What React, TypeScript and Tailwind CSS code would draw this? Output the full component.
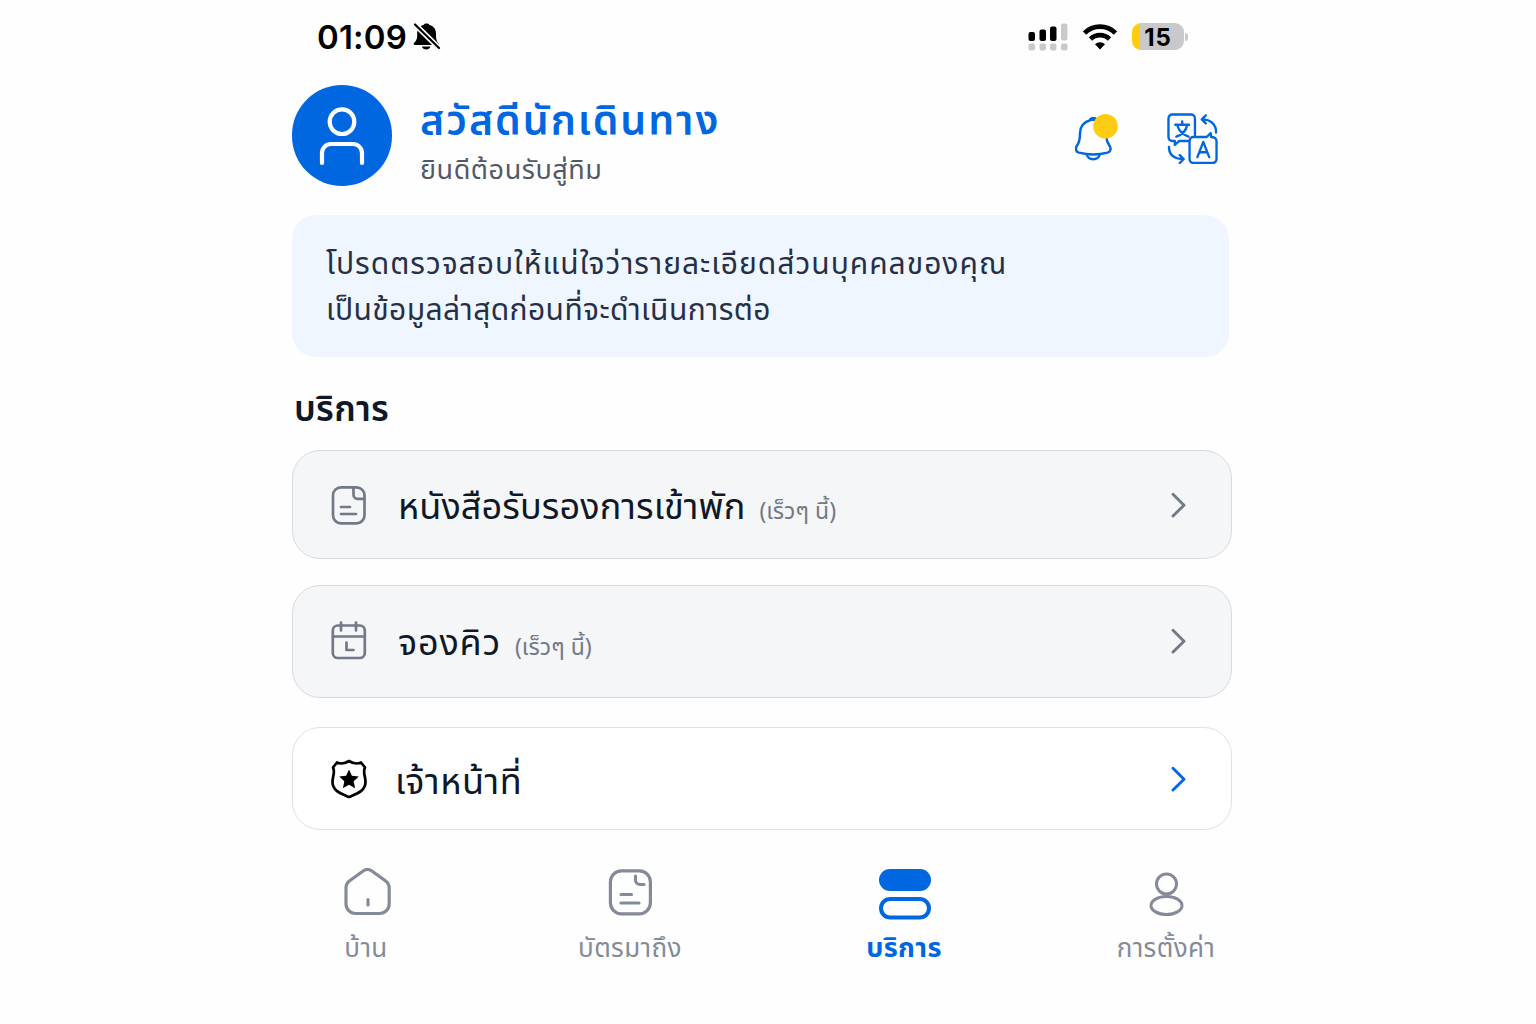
import React from 'react';

interface ServiceItem {
  label: string;
  soon?: boolean;
  icon: React.ReactNode;
  box: string;
  text: string;
  chevron: string;
}

const SOON = '(เร็วๆ นี้)';

const StatusBar = () => (
  <div className="flex h-[73px] items-center justify-between pl-[25px] pr-[44px]">
    <div className="flex items-center gap-[6px]">
      <span className="w-[90px] whitespace-nowrap font-['Inter',sans-serif] text-[33px] font-semibold leading-[40px] tracking-[0.2px] text-black">01:09</span>
      <svg width="28" height="28" viewBox="0 0 28 28" fill="none">
        <path d="M13.500 .5c1.600 0 2.600.6 3 1.500 4 1 6.500 4 6.500 8.500 0 6 .5 7.500 3 10.500v1H2.200c-1.700 0-2-1.200-1-2.300C4 17 4.200 15 4.200 10.500c0-4.500 2.300-7.500 6.300-8.500.4-.9 1.400-1.500 3-1.500Z" fill="#000" />
        <path d="M8.800 23.500h8.700c-.6 2-2.200 3-4.200 3s-3.900-1-4.500-3Z" fill="#000" />
        <path d="M0 -0.500 28 27" stroke="#fefefe" strokeWidth="5.500" />
        <path d="M2 1.500 26 25" stroke="#000" strokeWidth="2.200" strokeLinecap="round" />
      </svg>
    </div>
    <div className="flex items-center">
      <svg width="40" height="28" viewBox="0 0 40 28">
        <rect x="0.500" y="9" width="6.500" height="9" rx="2" fill="#000" />
        <rect x="11.500" y="6.500" width="6.500" height="11.500" rx="2" fill="#000" />
        <rect x="22" y="3.500" width="6.500" height="14.500" rx="2" fill="#000" />
        <rect x="33" y="0.500" width="6.500" height="17" rx="2" fill="#c9c9cb" />
        {[0.5, 11.5, 22, 33].map((x) => (
          <rect key={x} x={x} y="20.500" width="6.500" height="7" rx="2" fill="#c9c9cb" />
        ))}
      </svg>
      <svg className="ml-[15px]" width="34" height="26" viewBox="0 0 34 26" fill="none" stroke="#000">
        <path d="M1.500 9a22 22 0 0 1 31 0" strokeWidth="4.700" />
        <path d="M7.500 15a13.500 13.500 0 0 1 19 0" strokeWidth="4.700" />
        <path d="M17 25.500 12 20.300a7 7 0 0 1 10 0Z" fill="#000" stroke="none" />
      </svg>
      <div className="ml-[15px] flex h-[27px] w-[52px] items-center justify-center overflow-hidden rounded-[9px] bg-linear-to-r from-[#ffcc10] from-[8px] to-[#c9c9cb] to-[8px]">
        <span className="pt-[1px] font-['Inter',sans-serif] text-2xl font-bold leading-[27px] tracking-[0.8px] text-black">15</span>
      </div>
      <div className="ml-[1px] h-[8px] w-[3px] rounded-r-full bg-[#c9c9cb]" />
    </div>
  </div>
);

const BellIcon = () => (
  <svg width="46" height="50" viewBox="0 0 46 50" fill="none" stroke="#0067e0" strokeWidth="2.500" strokeLinecap="round" strokeLinejoin="round">
    <path d="M15 7.300c.5-2.600 6-2.600 6.500 0 6.500 2 10 7 10 13 0 7 .5 8.500 2.500 11.500 2.500 3.500 2 6.800-1.500 7.800-9 2.300-19.500 2.300-28.500 0C.500 38.600 0 35.300 2.500 31.800 4.700 28.600 5 26.800 5 20.300c0-6.500 3.500-11 10-13Z" />
    <path d="M12 42c1.500 5.600 11 5.600 12.500 0" />
    <path d="M15.500 6.800c1-2 4.500-2 5.500 0Z" fill="#0067e0" />
    <circle cx="30.500" cy="13.200" r="12.300" fill="#ffcc14" stroke="none" />
  </svg>
);

const TranslateIcon = () => (
  <svg width="51" height="51" viewBox="0 0 52 52" fill="none" stroke="#0067e0" strokeWidth="2.400" strokeLinecap="round" strokeLinejoin="round">
    <path d="M22.500 28.500H12.500l-4.500 4v-4H5.500a4 4 0 0 1-4-4v-19a4 4 0 0 1 4-4h19a4 4 0 0 1 4 4v18" />
    <path d="M27 24.500h13.500l4-4 .5 4c3 0 5.500 1.500 5.500 4v18.500a4 4 0 0 1-4 4H27a4 4 0 0 1-4-4V28.500a4 4 0 0 1 4-4Z" />
    <path d="M8.500 12h14M15.500 8.500v3.500M20.500 12.500c-1 5.500-5 9.500-11 11.500M10.500 12.500c1.500 5.500 5.500 9.500 11.500 11.500" />
    <path d="m31 45 6-15.500 6 15.500M33 40h8" />
    <path d="M50 20c.3-8-5-13.500-14.500-13.500M39.500 2.500l-4 4 4 4M2 34.500c0 8 4.500 12.500 15 12.500M13 43l4 4-4 4" />
  </svg>
);

const Header = () => (
  <header className="flex h-[142px] items-start pt-[12px]">
    <div className="flex h-[101px] w-[100px] items-center justify-center rounded-full bg-[#0067e0]">
      <svg width="46" height="60" viewBox="0 0 46 60" fill="none" stroke="#fff" strokeWidth="4.200" strokeLinecap="round">
        <circle cx="23" cy="15.700" r="12.300" />
        <path d="M3 57V47a9 9 0 0 1 9-9h22a9 9 0 0 1 9 9v10" />
      </svg>
    </div>
    <div className="ml-[28px] flex-1">
      <h1 className="mt-[11px] h-[52px] whitespace-nowrap text-[41px] font-semibold leading-[52px] tracking-[1.95px] text-[#0067e0]">สวัสดีนักเดินทาง</h1>
      <p className="mt-[5px] h-[36px] whitespace-nowrap text-[27px] leading-[36px] tracking-[0.55px] text-[#525868]">ยินดีต้อนรับสู่ทิม</p>
    </div>
    <div className="mr-[14px] mt-[28px] flex gap-[46px]">
      <BellIcon />
      <TranslateIcon />
    </div>
  </header>
);

const DocumentIcon = () => (
  <svg width="36" height="40" viewBox="0 0 36 40" fill="none" stroke="#727987" strokeWidth="2.700" strokeLinecap="round" strokeLinejoin="round">
    <path d="M22.500 2.300H10a8 8 0 0 0-8 8v20a8 8 0 0 0 8 8h15.500a8 8 0 0 0 8-8V13.800M22.500 2.300h3a8 8 0 0 1 8 8v3.500h-7a4 4 0 0 1-4-4Z" />
    <path d="M10 22h9M10 29h15" />
  </svg>
);

const CalendarIcon = () => (
  <svg width="36" height="40" viewBox="0 0 36 40" fill="none" stroke="#727987" strokeWidth="2.700" strokeLinecap="round" strokeLinejoin="round">
    <rect x="1.800" y="4.500" width="32" height="32.500" rx="5" />
    <path d="M2 15.500h31.500M10 1.500v8M25 1.500v8M15.500 21.500v7.500h7" />
  </svg>
);

const BadgeIcon = () => (
  <svg width="36" height="40" viewBox="0 0 36 40" fill="none">
    <path d="M18 2c4 2.600 8.500 3.100 12 1.500l4 5c-2.500 4.500.5 8.500.5 14.500 0 9-8.500 11.500-16.500 15C10 34.500 1.500 32 1.500 23c0-6 3-10 .5-14.500l4-5C9.500 5.100 14 4.600 18 2Z" stroke="#000" strokeWidth="2.700" strokeLinejoin="round" />
    <path d="m18 10.500 2.900 6.300 6.900.8-5.100 4.700 1.400 6.900-6.100-3.500-6.100 3.500 1.400-6.900-5.100-4.700 6.900-.8Z" fill="#000" />
  </svg>
);

const SERVICES: ServiceItem[] = [
  {
    label: 'หนังสือรับรองการเข้าพัก',
    soon: true,
    icon: <DocumentIcon />,
    box: 'h-[109px] border-[#d8dade] bg-[#f5f6f8]',
    text: 'ml-[31px] pt-[6px] tracking-[0.1px]',
    chevron: '#727987',
  },
  {
    label: 'จองคิว',
    soon: true,
    icon: <CalendarIcon />,
    box: 'mt-[26px] h-[113px] border-[#d8dade] bg-[#f5f6f8] pb-[2px]',
    text: 'ml-[31px] pt-[6px] tracking-[0.8px]',
    chevron: '#727987',
  },
  {
    label: 'เจ้าหน้าที่',
    icon: <BadgeIcon />,
    box: 'mt-[29px] h-[103px] border-[#e0e1e4] bg-white',
    text: 'ml-[28px] pt-[8px] tracking-[0.6px]',
    chevron: '#0067e0',
  },
];

const ServiceRow = ({ item }: { item: ServiceItem }) => (
  <button type="button" className={`flex w-full items-center rounded-[28px] border pl-[38px] pr-[45px] text-left ${item.box}`}>
    {item.icon}
    <span className={`whitespace-nowrap text-[36px] leading-[48px] text-[#101828] ${item.text}`}>{item.label}</span>
    {item.soon && <span className="ml-[14px] mt-[15px] whitespace-nowrap text-[23px] leading-[32px] text-[#727987]">{SOON}</span>}
    <svg className="ml-auto" width="16" height="26" viewBox="0 0 16 26" fill="none" stroke={item.chevron} strokeWidth="2.900" strokeLinecap="round" strokeLinejoin="round">
      <path d="M3 2.300 14 13.200 3 24" />
    </svg>
  </button>
);

const BottomNav = () => (
  <nav className="flex h-[150px] pt-[36px] text-[26px] leading-[36px] tracking-[0.4px] text-[#848a97]">
    <a className="flex w-[148px] flex-col items-center">
      <svg className="ml-[3px] shrink-0" width="48" height="50" viewBox="0 0 48 50" fill="none" stroke="currentColor" strokeWidth="3.200" strokeLinecap="round" strokeLinejoin="round">
        <path d="M19.500 4.800a7 7 0 0 1 8 0l13.500 9.700c3 2.200 4.200 4.200 4.200 7V38a9.500 9.500 0 0 1-9.500 9.500H11.500A9.500 9.500 0 0 1 2 38V21.500c0-2.800 1-4.800 4-7Z" />
        <path d="M24 33.500v5.500" />
      </svg>
      <span className="mt-[15px] whitespace-nowrap">บ้าน</span>
    </a>
    <a className="ml-[116px] flex w-[148px] flex-col items-center">
      <svg className="shrink-0" width="44" height="50" viewBox="0 0 44 50" fill="none" stroke="currentColor" strokeWidth="3.200" strokeLinecap="round" strokeLinejoin="round">
        <rect x="2.400" y="4.800" width="40" height="43" rx="11" />
        <path d="M27.500 10v4a4.500 4.500 0 0 0 4.500 4.500h4M13 28.500h10.500M13 37h18" />
      </svg>
      <span className="mt-[15px] whitespace-nowrap">บัตรมาถึง</span>
    </a>
    <a className="ml-[126px] flex w-[148px] flex-col items-center font-bold text-[#0067e0]">
      <svg className="ml-px shrink-0" width="52" height="54" viewBox="0 0 52 54" fill="none">
        <rect y="3" width="52" height="22" rx="11" fill="currentColor" />
        <rect x="2" y="33" width="48" height="18.500" rx="9.250" stroke="currentColor" strokeWidth="4" />
      </svg>
      <span className="mt-[11px] whitespace-nowrap text-[27px] tracking-[0.4px]">บริการ</span>
    </a>
    <a className="ml-[122px] flex w-[132px] flex-col items-center">
      <svg className="shrink-0" width="36" height="50" viewBox="0 0 36 50" fill="none" stroke="currentColor" strokeWidth="3">
        <circle cx="18.500" cy="18" r="10" />
        <ellipse cx="18.500" cy="39.500" rx="15.500" ry="9" />
      </svg>
      <span className="mt-[15px] whitespace-nowrap">การตั้งค่า</span>
    </a>
  </nav>
);

export default function App() {
  return (
    <div className="h-[1024px] w-full overflow-hidden bg-[#fefefe] pl-[292px] font-['Noto_Sans_Thai','Noto_Sans','Inter',sans-serif]">
      <div className="w-[940px]">
        <StatusBar />
        <Header />
        <section className="h-[142px] w-[937px] rounded-3xl bg-[#eff6ff] px-[34px] pt-[27px] text-[30px] leading-[46px] text-[#253047]">
          <p className="whitespace-nowrap tracking-[1px]">โปรดตรวจสอบให้แน่ใจว่ารายละเอียดส่วนบุคคลของคุณ</p>
          <p className="whitespace-nowrap tracking-[0.4px]">เป็นข้อมูลล่าสุดก่อนที่จะดำเนินการต่อ</p>
        </section>
        <h2 className="mt-[29px] h-[50px] whitespace-nowrap pl-[2px] text-[35px] font-semibold leading-[50px] tracking-[0.3px] text-[#101828]">บริการ</h2>
        <main className="mt-[14px]">
          {SERVICES.map((item) => (
            <ServiceRow key={item.label} item={item} />
          ))}
        </main>
        <BottomNav />
      </div>
    </div>
  );
}
